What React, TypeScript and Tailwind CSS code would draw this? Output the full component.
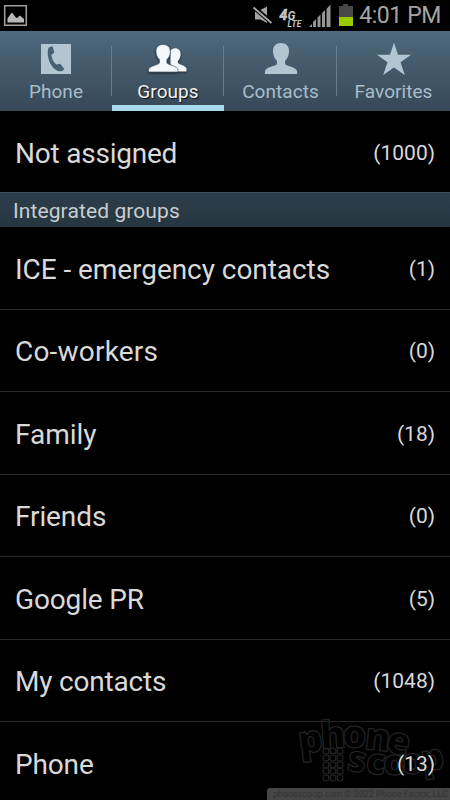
import type { ReactNode } from 'react';

type Group = { name: string; count: number; spacing: string };

const integratedGroups: Group[] = [
  { name: 'ICE - emergency contacts', count: 1, spacing: 'tracking-[-0.06px]' },
  { name: 'Co-workers', count: 0, spacing: 'tracking-[0.2px]' },
  { name: 'Family', count: 18, spacing: 'tracking-[-0.05px]' },
  { name: 'Friends', count: 0, spacing: 'tracking-[-0.1px]' },
  { name: 'Google PR', count: 5, spacing: 'tracking-[-0.15px]' },
  { name: 'My contacts', count: 1048, spacing: 'tracking-[-0.2px]' },
  { name: 'Phone', count: 13, spacing: 'tracking-[-0.15px]' },
];

function PhoneIcon() {
  return (
    <svg width="32" height="32" viewBox="0 0 32 32">
      <path fill="#b3c5d1" d="M1 1h30v30H1z" />
      <path
        fill="#486074"
        d="M8.500 4.800c1.300-1 2.800-1.500 4.300-1.300l1.500 6.300-3 1.900c.6 4.300 2.300 7.500 5 9.900l3.900-.8 4.200 5.200c-1.300 1.800-3.300 2.500-5.600 2.200-3.800-1-7.300-4.800-9.300-9.500C7.600 14 7.100 8.700 8.500 4.800z"
      />
    </svg>
  );
}

function GroupsIcon() {
  return (
    <svg width="40" height="32" viewBox="0 0 40 32" className="drop-shadow-[0_1px_1px_rgba(0,0,0,0.6)]">
      <path
        fill="#f5f8fa"
        d="M27 5.300c3.700 0 5.800 2.500 5.600 6.100-.1 3-1.200 5-2.700 6.500v2.200c1.500 1.800 8.100 2.300 8.600 5.700V28.500H30l-6-6-1.500-1.300V8c.8-1.900 2.500-2.700 4.500-2.700z"
      />
      <path
        fill="#f5f8fa"
        stroke="#435a6c"
        strokeWidth=".7"
        d="M15 1.500c4.700 0 7.500 3 7.300 7.300-.1 3.400-1.300 6-3.400 7.800v3.500c2 2.400 10.500 2.500 11.100 6.900v2H.5v-2c.6-4.400 8.900-4.500 10.900-6.900v-3.500c-1.900-1.800-3.200-4.400-3.400-7.800C7.800 4.500 10.300 1.500 15 1.500z"
      />
    </svg>
  );
}

function ContactIcon() {
  return (
    <svg width="34" height="32" viewBox="0 0 34 32">
      <path
        fill="#b3c5d1"
        d="M17 0c5 0 8.200 3.200 8 8.200-.1 4-1.500 7.300-3.900 9.500v3.600c2.400 2.400 11.500 2.300 12 7.300V31H.9v-2.400c.5-5 9.600-4.900 12-7.300v-3.600C10.500 15.500 9.100 12.200 9 8.200 8.800 3.200 12 0 17 0z"
      />
    </svg>
  );
}

function StarIcon() {
  return (
    <svg width="34" height="32" viewBox="0 0 34 32">
      <path fill="#b3c5d1" d="M17-.3l4 12h13L23.500 19.200l4.300 12.900L17 24.400 6.200 32.100l4.300-12.900L0 11.700h13z" />
    </svg>
  );
}

function StatusBar() {
  return (
    <header className="flex h-[31px] shrink-0 items-center justify-between pr-[9px] pl-[3px]">
      <svg width="25" height="23" viewBox="0 0 25 23">
        <path fill="none" stroke="#a0a0a0" strokeWidth="1.500" d="M1.700 1.700h21.600v19.500H1.700z" />
        <path fill="#b8b8b8" d="M4.500 18.500v-4l3.800-5.500h1l3.500 4.500 1.200.5 3-2.500 1.500 1.500 2.500 2v3.500z" />
      </svg>
      <div className="flex items-center">
        <svg width="108" height="31" viewBox="0 0 108 31">
          <g transform="translate(4.500 0)">
            <path fill="#a3a3a3" d="M1.500 10.500H6l7.500-4v16.500L7 19.500H1.500z" />
            <path stroke="#000" strokeWidth="4.500" d="M0 7l18 15.500" />
            <path stroke="#a3a3a3" strokeWidth="2" d="M0 7.500l18 15.500" />
          </g>
          <g fill="#c2c2c2" fontFamily="Roboto, sans-serif" fontStyle="italic" fontWeight="700">
            <text x="30.500" y="20" fontSize="14" stroke="#c2c2c2" strokeWidth=".6">4</text>
            <text x="38.500" y="19.500" fontSize="12">G</text>
            <text x="38.500" y="26.500" fontSize="8.500" textLength="14">LTE</text>
          </g>
          <path
            fill="#969696"
            d="M60 27l3-3v3zM64 27v-5l3-3v8zM68.500 27v-9.500l3-3V27zM73 27V13l3-3v17zM77.500 27V9l4-4.500V27z"
          />
          <path fill="#484848" d="M94 4h5v2h5v11H90V6h4z" />
          <path fill="#99cc00" d="M90 17h14v9H90z" />
        </svg>
        <span className="ml-0.5 text-[23px] leading-[31px] tracking-[-0.4px] text-[#a4a4a4]">4:01 PM</span>
      </div>
    </header>
  );
}

function Tab({ icon, label, active, last }: { icon: ReactNode; label: string; active?: boolean; last?: boolean }) {
  return (
    <div className="relative flex flex-col items-center pt-3">
      {icon}
      <span
        className={`mt-[5px] text-[19px] leading-6 tracking-[0.05px] ${
          active ? 'text-[#eef2f4] [text-shadow:1px_1px_1px_#111]' : 'text-[#a9bdca]'
        }`}
      >
        {label}
      </span>
      {active && <span className="absolute inset-x-0 bottom-0 h-1.5 bg-[#a9d7ee]" />}
      {!last && <span className="absolute top-[15px] right-0 h-[50px] w-px bg-[#667e90]" />}
    </div>
  );
}

function GroupRow({ name, count, spacing }: Group) {
  return (
    <li className="flex h-[82.5px] shrink-0 items-center justify-between border-b border-[#282828] px-[15px] pt-1 text-[#d9d9d9]">
      <span className={`text-[28px] leading-8 ${spacing}`}>{name}</span>
      <span className="-mt-0.5 text-[21px] leading-8">({count})</span>
    </li>
  );
}

// Faint outline logo behind the list's bottom corner
function Watermark() {
  return (
    <svg className="absolute top-[700px] left-[290px]" width="160" height="90" viewBox="0 -10 160 90">
      <g
        fill="none"
        stroke="#242424"
        strokeWidth="1.200"
        fontFamily="Open Sans, sans-serif"
        fontWeight="800"
        fontSize="38"
      >
        <text x="10 31 52 74 95" y="44 39 37 39 42" rotate="-8 -4 2 6 10">phone</text>
        <text x="56 75 93 112 133" y="60 63 65 65 62" rotate="10 6 0 -6 -10" fontSize="36">scoop</text>
        {[41, 48, 55, 61, 68].map((y) =>
          [36, 43, 50].map((x) => <circle key={`${x}-${y}`} cx={x} cy={y} r="3" />),
        )}
      </g>
    </svg>
  );
}

export default function App() {
  return (
    <div className="relative flex h-[800px] w-[450px] flex-col overflow-hidden bg-black font-['Roboto',sans-serif]">
      <Watermark />
      <StatusBar />
      <nav className="grid h-20 shrink-0 grid-cols-[112px_112px_113px_113px] bg-linear-to-b from-[#4f697d] to-[#374857]">
        <Tab icon={<PhoneIcon />} label="Phone" />
        <Tab icon={<GroupsIcon />} label="Groups" active />
        <Tab icon={<ContactIcon />} label="Contacts" />
        <Tab icon={<StarIcon />} label="Favorites" last />
      </nav>
      <ul className="relative shrink-0">
        <GroupRow name="Not assigned" count={1000} spacing="tracking-[-0.22px]" />
      </ul>
      <h2 className="relative -mt-[1.500px] h-[35px] shrink-0 border-t border-[#3b4e5b] bg-linear-to-b from-[#2d3d4a] to-[#263641] pl-[13px] text-[21px] leading-[36px] tracking-[0.1px] text-[#c9cdd0]">
        Integrated groups
      </h2>
      <ul className="relative flex shrink-0 flex-col">
        {integratedGroups.map((group) => (
          <GroupRow key={group.name} {...group} />
        ))}
      </ul>
      <footer className="absolute right-0 bottom-0 flex h-3 w-[183px] justify-between overflow-hidden rounded-tl-[3px] bg-[#464646] pr-0.5 pl-1.5 text-[9px] leading-3 text-[#343434]">
        <span>phonescoop.com</span>
        <span>© 2022 Phone Factor, LLC</span>
      </footer>
    </div>
  );
}
